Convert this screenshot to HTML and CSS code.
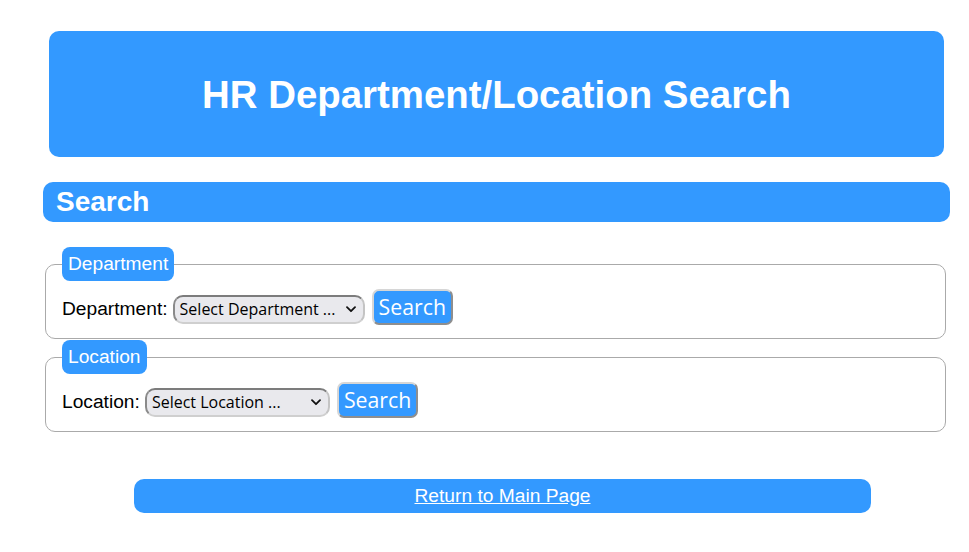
FILE: index.html
```html
<!DOCTYPE html>
<html lang="en">
<head>
<meta charset="utf-8">
<title>HR Department/Location Search</title>
<link rel="stylesheet" href="styles.css">
</head>
<body>
<div class="page">
  <header class="banner">
    <h1 class="title">HR Department/Location Search</h1>
  </header>
  <h2 class="section-bar">Search</h2>
  <form class="search-form">
    <fieldset class="group">
      <legend class="group-legend">Department</legend>
      <div class="row">
        <label class="row-label" for="dept">Department:</label>
        <select class="picker picker-dept" id="dept">
          <option>Select Department ...</option>
        </select>
        <button class="go" type="button">Search</button>
      </div>
    </fieldset>
    <fieldset class="group group-second">
      <legend class="group-legend">Location</legend>
      <div class="row">
        <label class="row-label" for="loc">Location:</label>
        <select class="picker picker-loc" id="loc">
          <option>Select Location ...</option>
        </select>
        <button class="go" type="button">Search</button>
      </div>
    </fieldset>
  </form>
  <div class="return-bar"><a class="return-link" href="#">Return to Main Page</a></div>
</div>
</body>
</html>
```

FILE: styles.css
```css
html, body {
  margin: 0;
  padding: 0;
  background: #ffffff;
}

body {
  font-family: "Liberation Sans", Arial, sans-serif;
  font-size: 19.2px;
  color: #000000;
}

.page {
  width: 907px;
  margin-left: 43px;
  padding-top: 31px;
}

.banner {
  margin: 0 6px;
  height: 126px;
  background: #3399ff;
  border-radius: 10px;
  display: flex;
  align-items: center;
  justify-content: center;
}

.title {
  margin: 2px 0 0 0;
  color: #ffffff;
  font-size: 38.4px;
  font-weight: bold;
  line-height: 1;
}

.section-bar {
  margin: 25px 0 0 0;
  height: 40px;
  line-height: 40px;
  padding-left: 13px;
  background: #3399ff;
  border-radius: 10px;
  color: #ffffff;
  font-size: 28px;
  font-weight: bold;
}

.search-form {
  margin: 25px 0 0 0;
}

.group {
  margin: 0 4px 0 2px;
  padding: 8px 16px 13px 16px;
  border: 1px solid #aaaaaa;
  border-radius: 10px;
  min-width: 0;
}

.group-second {
  margin-top: 1px;
}

.group-legend {
  padding: 0 6px;
  height: 34px;
  line-height: 34px;
  background: #3399ff;
  color: #ffffff;
  border-radius: 8px;
  font-size: 19.2px;
}

.row {
  display: flex;
  align-items: baseline;
}

.row-label {
  font-size: 19.2px;
  margin-right: 5px;
}

.picker {
  -webkit-appearance: none;
  appearance: none;
  height: 29px;
  font-family: "Open Sans", sans-serif;
  font-size: 16px;
  color: #000000;
  background-color: #e9e9ed;
  background-image: url("data:image/svg+xml,%3Csvg xmlns='http://www.w3.org/2000/svg' width='10' height='7' viewBox='0 0 10 7'%3E%3Cpath d='M1 1.2 L5 5.2 L9 1.2' fill='none' stroke='%23111' stroke-width='1.8' stroke-linecap='round' stroke-linejoin='round'/%3E%3C/svg%3E");
  background-repeat: no-repeat;
  background-position: right 7px center;
  background-size: 10px 7px;
  border: 2px solid #9a9a9a;
  border-top-color: #7c7c7c;
  border-left-color: #8a8a8a;
  border-bottom-color: #cfcfcf;
  border-right-color: #c4c4c4;
  border-radius: 10px;
  padding: 0 20px 0 5px;
  margin: 0 7px 0 0;
}

.picker-dept {
  width: 192px;
}

.picker-loc {
  width: 185px;
}

.go {
  height: 36px;
  padding: 0 5px;
  font-family: "Open Sans", sans-serif;
  font-size: 21.3px;
  color: #ffffff;
  background: #3399ff;
  border: 2px solid #8e8e8e;
  border-top-color: #d6d6d6;
  border-left-color: #d6d6d6;
  border-radius: 7px;
  line-height: 1;
}

.return-bar {
  margin: 47px 0 0 91px;
  width: 737px;
  height: 34px;
  line-height: 34px;
  background: #3399ff;
  border-radius: 10px;
  text-align: center;
}

.return-link {
  color: #ffffff;
  text-decoration: underline;
  font-size: 19.2px;
}
```
